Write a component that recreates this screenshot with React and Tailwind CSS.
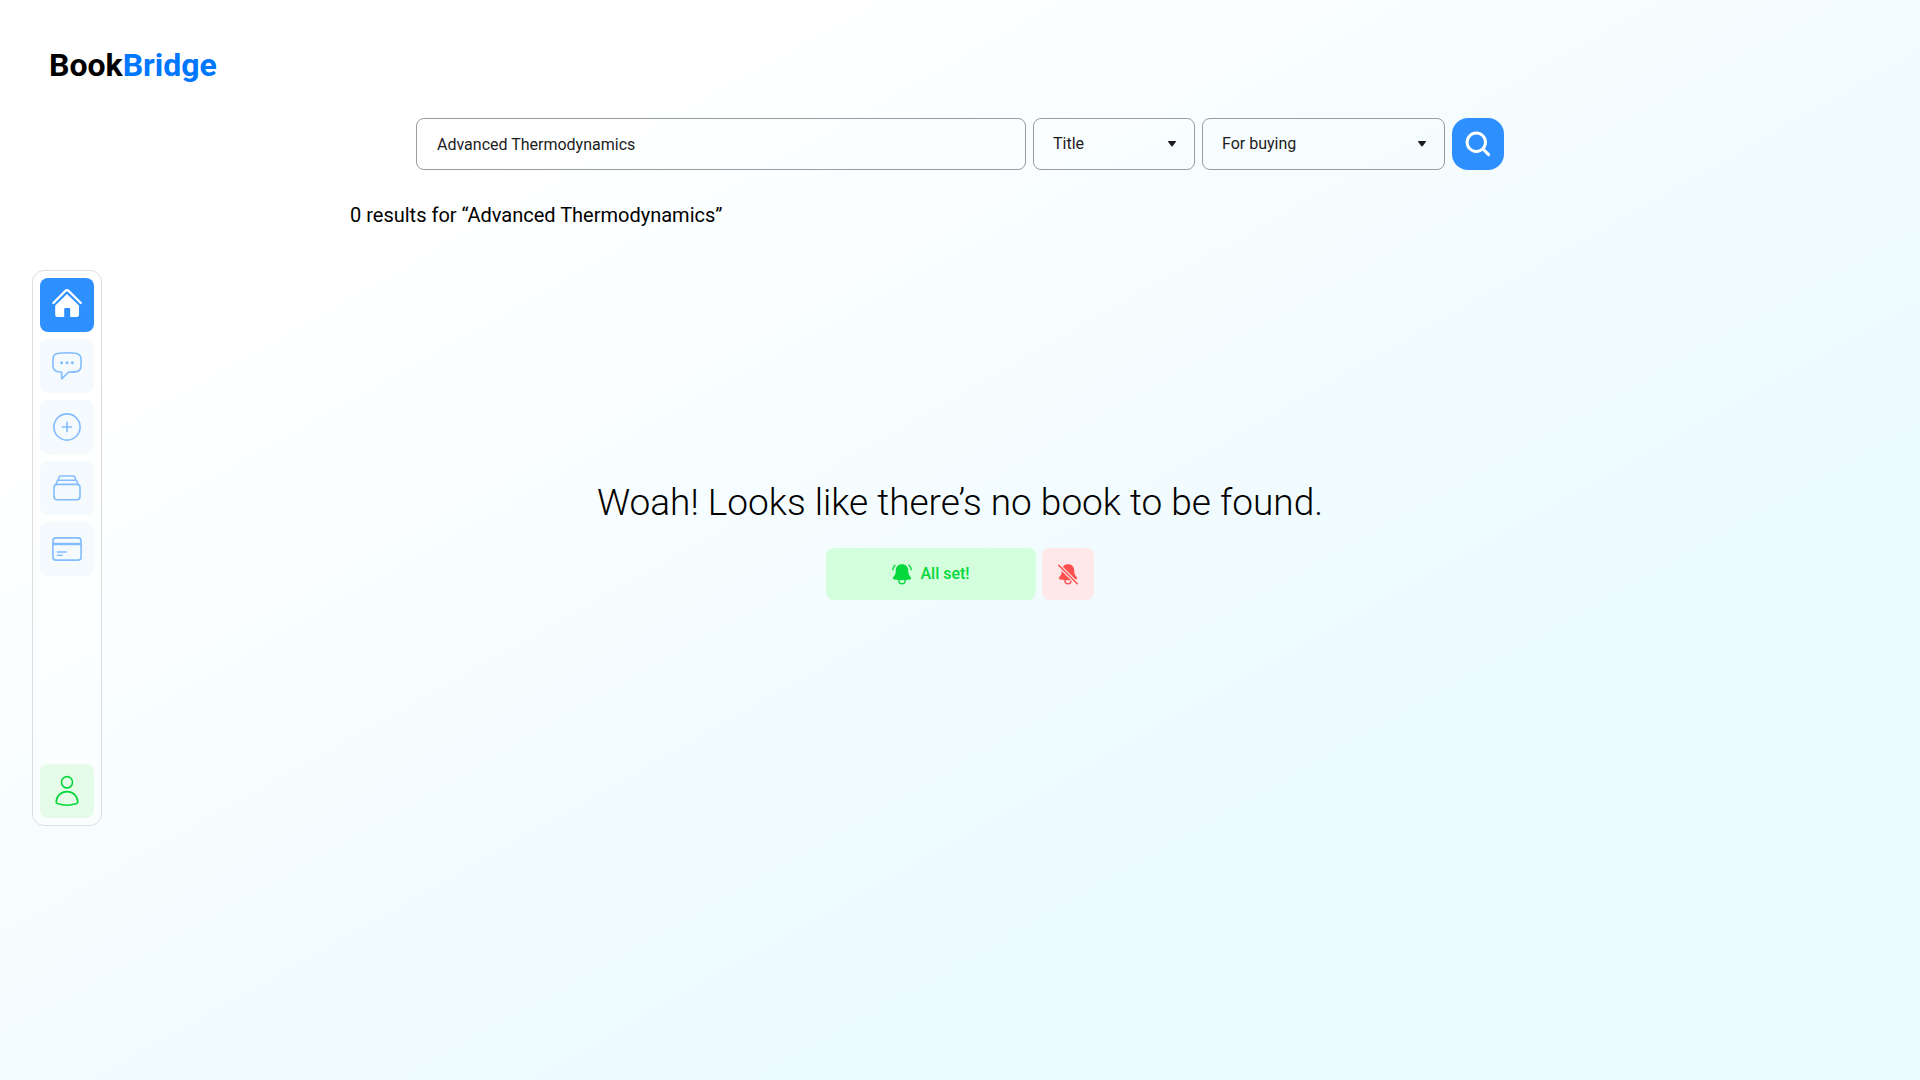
const strokeProps = {
  fill: "none",
  stroke: "currentColor",
  strokeWidth: 1.6,
  strokeLinecap: "round",
  strokeLinejoin: "round",
};

function NavIcon({ children }) {
  return (
    <svg viewBox="0 0 54 54" className="size-full" aria-hidden="true" {...strokeProps}>
      {children}
    </svg>
  );
}

const HomeIcon = () => (
  <NavIcon>
    <path strokeWidth="2.3" d="M13.4 25 L25.4 12.9 Q27 11.3 28.6 12.9 L40.8 25" />
    <path
      fill="currentColor"
      stroke="none"
      d="M27 15.9 L39 27.4 V36.8 Q39 39 36.8 39 H30.2 V31 Q30.2 30 29.2 30 H25.2 Q24.2 30 24.2 31 V39 H17.4 Q15.2 39 15.2 36.8 V27.4 Z"
    />
  </NavIcon>
);

const ChatIcon = () => (
  <NavIcon>
    <path d="M21.7 33.2 C17 33 13.9 32.4 13.2 28.6 C12.8 26 12.8 21 13.2 18.6 C13.8 15 16 14.6 18.6 14.3 C23.6 13.6 30.4 13.6 35.4 14.3 C38 14.6 40.2 15 40.8 18.6 C41.2 21 41.2 26 40.8 28.6 C40.1 32.6 36.4 33.1 28.4 33.3 L21.7 39.9 Z" />
    <g fill="currentColor" stroke="none">
      <circle cx="21.6" cy="23.7" r="1.5" />
      <circle cx="27" cy="23.7" r="1.5" />
      <circle cx="32.4" cy="23.7" r="1.5" />
    </g>
  </NavIcon>
);

const AddIcon = () => (
  <NavIcon>
    <circle cx="27" cy="27" r="13.1" />
    <path d="M27 22.4 V31.6 M22.4 27 H31.6" />
  </NavIcon>
);

const CollectionIcon = () => (
  <NavIcon>
    <rect x="14" y="23.4" width="26" height="15.4" rx="3.2" />
    <path d="M16 23.6 L16.8 20.8 Q17.3 19.2 19 19.2 H35 Q36.7 19.2 37.2 20.8 L38 23.6" />
    <path d="M18.2 19.2 L18.8 16.6 Q19.2 15 20.8 15 H33.2 Q34.8 15 35.2 16.6 L35.8 19.2" />
  </NavIcon>
);

const CardIcon = () => (
  <NavIcon>
    <rect x="12.9" y="15.9" width="28.2" height="22.2" rx="3.2" />
    <path strokeWidth="2.5" strokeLinecap="butt" d="M12.9 22 H41.1" />
    <path d="M17.4 30 H26 M17.4 33.3 H22" />
  </NavIcon>
);

const UserIcon = () => (
  <NavIcon>
    <ellipse cx="27" cy="18.3" rx="5.5" ry="5.7" />
    <path d="M27 27.6 C21 27.6 16.2 32.2 16.2 38.4 C16.2 39.2 17 39.5 18 39.8 C23 41.4 31 41.4 36 39.8 C37 39.5 37.8 39.2 37.8 38.4 C37.8 32.2 33 27.6 27 27.6 Z" />
  </NavIcon>
);

const SearchIcon = () => (
  <svg viewBox="0 0 52 52" className="size-full" aria-hidden="true" fill="none" stroke="currentColor" strokeWidth="3" strokeLinecap="round">
    <circle cx="24.3" cy="24.2" r="9.2" />
    <path d="M31 31 L36.6 36.6" />
  </svg>
);

const bellBody =
  "M10 0.3 C6 0.3 3.9 3 3.8 6.4 C3.7 9.6 2.9 11.4 1.4 13 C0.4 14.2 0.9 15.3 2.3 15.6 C7 16.6 13 16.6 17.7 15.6 C19.1 15.3 19.6 14.2 18.6 13 C17.1 11.4 16.3 9.6 16.2 6.4 C16.1 3 14 0.3 10 0.3 Z";

const BellRingIcon = () => (
  <svg viewBox="0 0 20 21" className="h-[21px] w-5" aria-hidden="true" fill="none" stroke="currentColor" strokeWidth="1.4" strokeLinecap="round">
    <path fill="currentColor" stroke="none" d={bellBody} />
    <path d="M6.9 16.2 C7 21 13 21 13.1 16.2" />
    <path d="M3 1.2 Q1 3 0.8 5.8 M17 1.2 Q19 3 19.2 5.8" />
  </svg>
);

const BellOffIcon = () => (
  <svg viewBox="0 0 20 21" className="h-[21px] w-5" aria-hidden="true" fill="none" strokeLinecap="round">
    <defs>
      <mask id="bell-slash">
        <rect width="20" height="21" fill="white" />
        <path d="M-1 -0.4 L20.5 21.1" stroke="black" strokeWidth="3.8" />
      </mask>
    </defs>
    <g mask="url(#bell-slash)">
      <path fill="currentColor" d={bellBody} />
      <path stroke="currentColor" strokeWidth="1.4" d="M6.9 16.2 C7 21 13 21 13.1 16.2" />
    </g>
    <path stroke="currentColor" strokeWidth="1.4" d="M0.7 1.3 L19.2 19.8" />
  </svg>
);

const navItems = [
  { label: "Home", Icon: HomeIcon, active: true },
  { label: "Messages", Icon: ChatIcon },
  { label: "Add a book", Icon: AddIcon },
  { label: "Collection", Icon: CollectionIcon },
  { label: "Payments", Icon: CardIcon },
];

function Dropdown({ label, options, className }) {
  return (
    <div className={`relative ${className}`}>
      <select
        aria-label={label}
        className="h-full w-full appearance-none rounded-lg border border-[#999c9e] bg-transparent px-[19px] text-base text-[#1c1c1c]"
      >
        {options.map((option) => (
          <option key={option}>{option}</option>
        ))}
      </select>
      <svg viewBox="0 0 8 6" className="pointer-events-none absolute top-[23px] right-[19px] h-1.5 w-2 fill-[#1c1c1c]" aria-hidden="true">
        <path d="M0.5 0 H7.5 Q8.2 0.2 7.8 0.9 L4.5 5.3 Q4 5.8 3.5 5.3 L0.2 0.9 Q-0.2 0.2 0.5 0 Z" />
      </svg>
    </div>
  );
}

export default function App() {
  return (
    <div className="flex min-h-screen flex-col bg-[linear-gradient(to_bottom_right,#ffffff_20%,#ebfaff_70%)] font-['Roboto',sans-serif] text-black">
      <header className="px-[49px] pt-[45px]">
        <a href="#" className="text-[32px] leading-[40px] font-bold">
          Book<span className="text-[#0077ff]">Bridge</span>
        </a>
      </header>

      <form className="mx-auto mt-[33px] flex h-[52px] w-full max-w-[1088px] gap-[7px]" onSubmit={(e) => e.preventDefault()}>
        <input
          type="text"
          aria-label="Search books"
          defaultValue="Advanced Thermodynamics"
          className="min-w-0 flex-1 rounded-lg border border-[#999c9e] bg-transparent px-5 pt-0.5 text-base text-[#1c1c1c]"
        />
        <Dropdown label="Search by" options={["Title", "Author", "ISBN"]} className="w-[162px]" />
        <Dropdown label="Purpose" options={["For buying", "For renting"]} className="w-[243px]" />
        <button type="submit" aria-label="Search" className="size-[52px] rounded-2xl bg-[#2e90ff] text-white">
          <SearchIcon />
        </button>
      </form>

      <p className="mx-auto mt-[31px] w-full max-w-[1220px] text-xl leading-[28px]">
        0 results for “Advanced Thermodynamics”
      </p>

      <div className="mt-[41px] flex">
        <nav aria-label="Main" className="ml-8 flex h-[556px] w-[70px] flex-col gap-[7px] rounded-xl border border-[#dcdddd] bg-white/40 p-[7px]">
          {navItems.map(({ label, Icon, active }) => (
            <button
              key={label}
              type="button"
              aria-label={label}
              className={`size-[54px] rounded-lg ${active ? "bg-[#2e90ff] text-white" : "bg-[#f5faff] text-[#82bcff]"}`}
            >
              <Icon />
            </button>
          ))}
          <button type="button" aria-label="Profile" className="mt-auto size-[54px] rounded-lg bg-[#e5fde8] text-[#05d83c]">
            <UserIcon />
          </button>
        </nav>

        <main className="mr-[102px] flex flex-1 flex-col items-center pt-[209px]">
          <h1 className="text-[37px] leading-[48px] font-[350]">Woah! Looks like there’s no book to be found.</h1>
          <div className="mt-[21px] flex h-[52px] gap-1.5">
            <button type="button" className="flex w-[210px] items-center justify-center gap-2 rounded-lg bg-[#d3ffdc] text-base font-medium text-[#05d83c]">
              <BellRingIcon />
              All set!
            </button>
            <button type="button" aria-label="Turn off alert" className="flex w-[52px] items-center justify-center rounded-lg bg-[#ffe8e9] text-[#ff4f4f]">
              <BellOffIcon />
            </button>
          </div>
        </main>
      </div>
    </div>
  );
}
